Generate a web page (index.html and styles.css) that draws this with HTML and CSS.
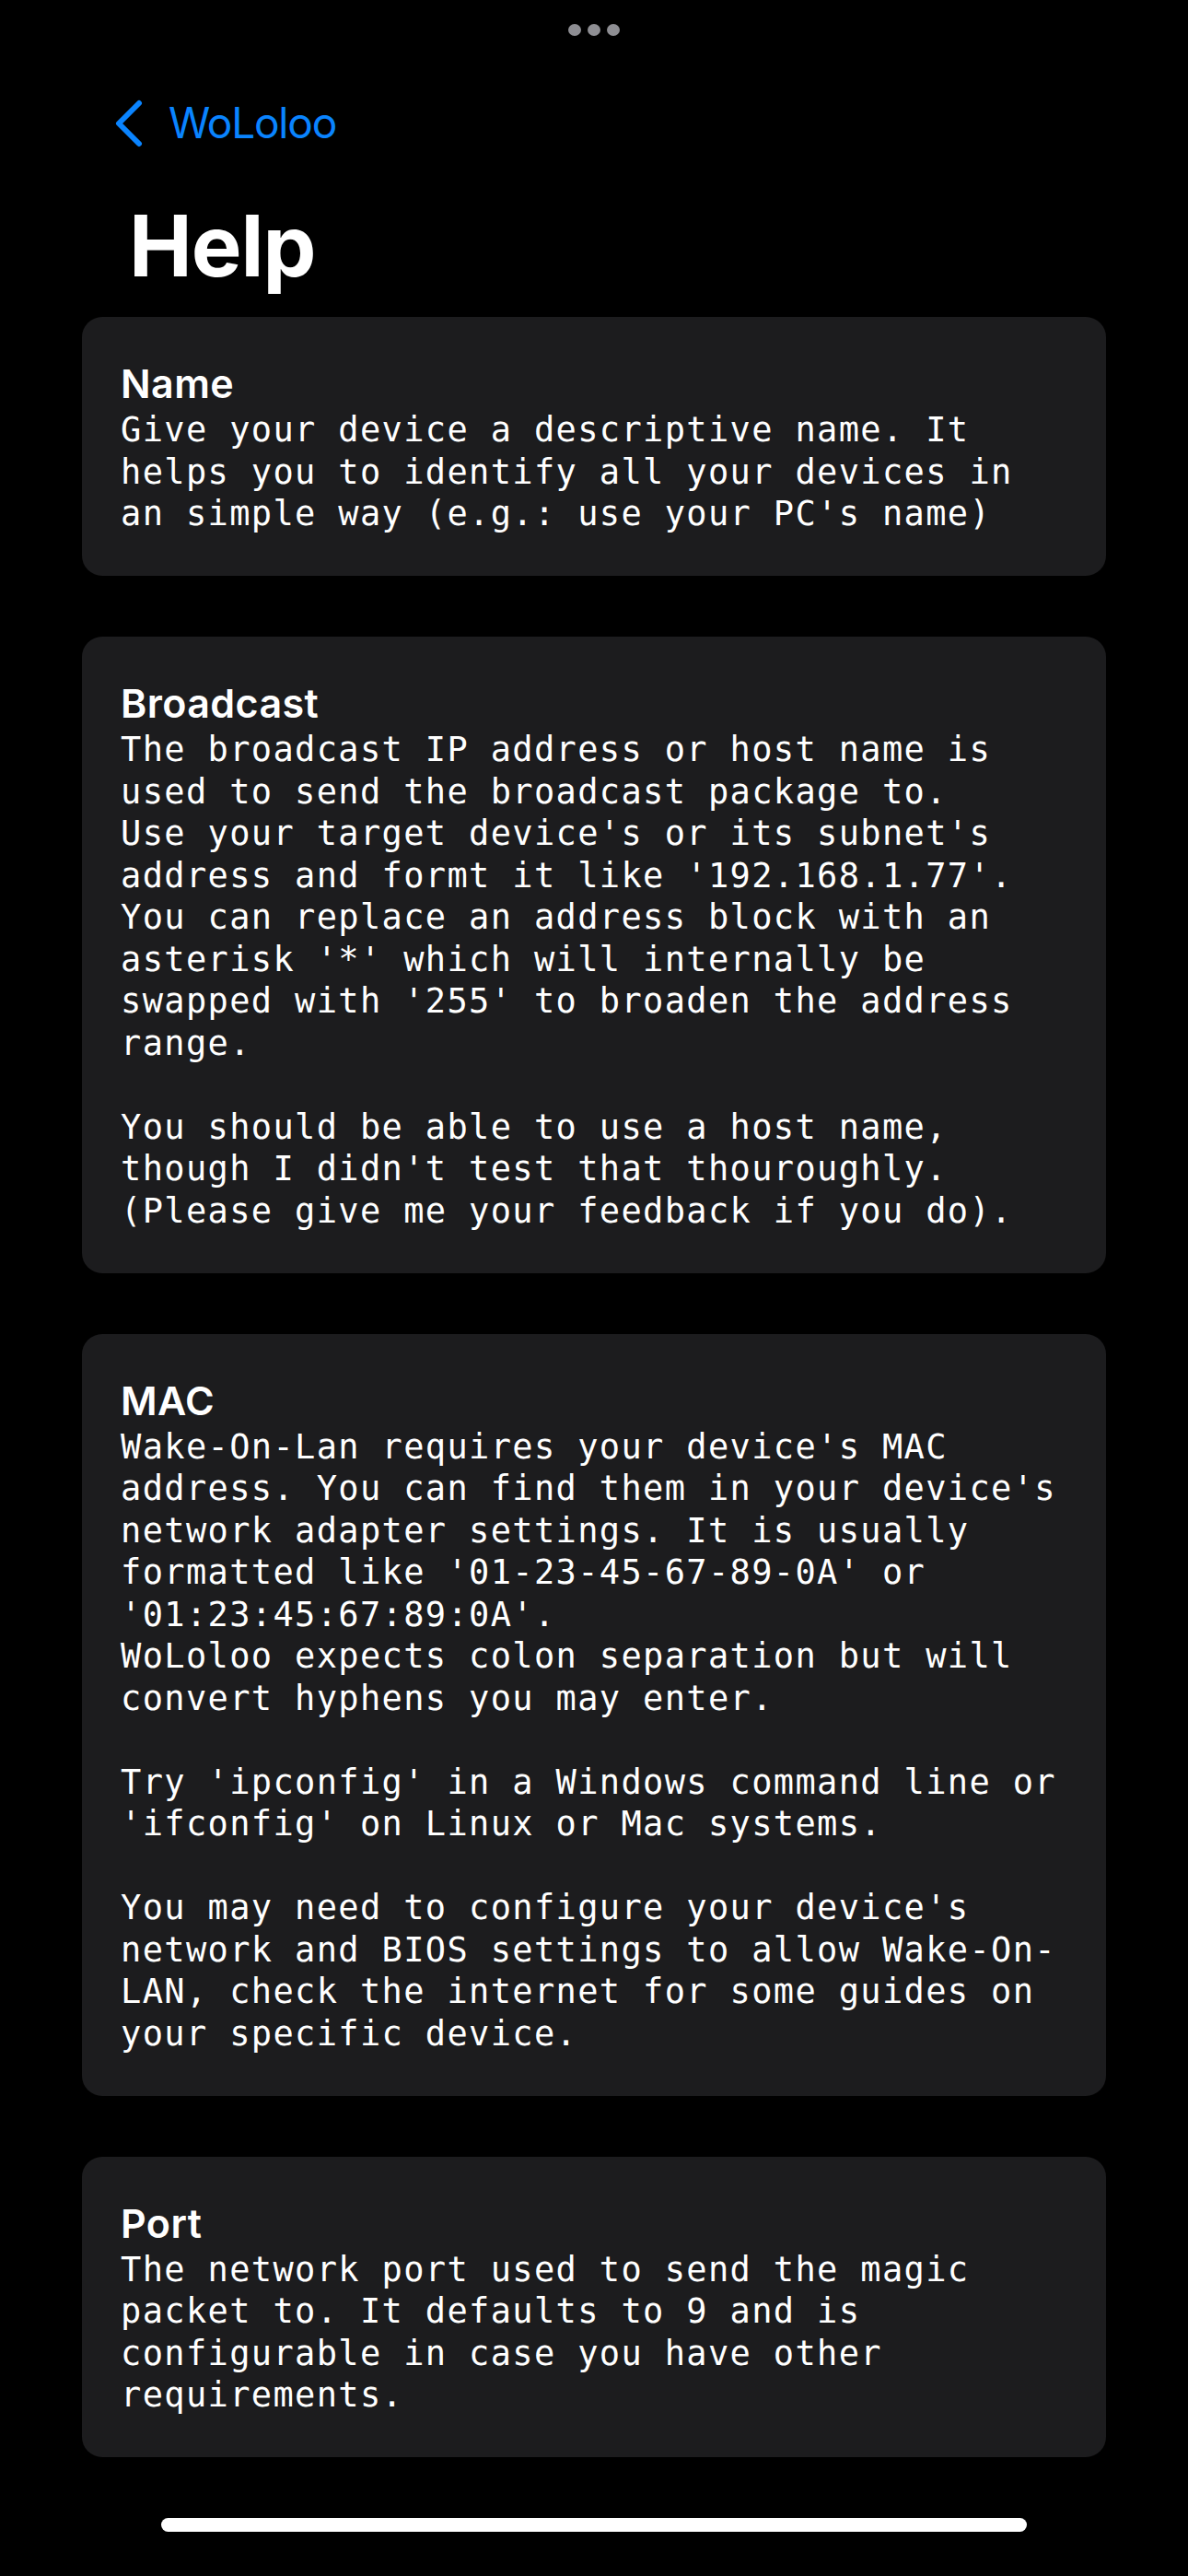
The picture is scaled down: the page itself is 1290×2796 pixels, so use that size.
FILE: index.html
```html
<!DOCTYPE html>
<html lang="en">
<head>
  <meta charset="UTF-8" />
  <meta name="viewport" content="width=device-width, initial-scale=1" />
  <title>WoLoloo - Help</title>
  <link rel="stylesheet" href="styles.css">
</head>
<body>
  <div class="screen">
    <!-- top grabber dots -->
    <div class="dots">
      <span></span><span></span><span></span>
    </div>

    <!-- navigation -->
    <div class="nav">
      <svg class="chevron" width="32" height="52" viewBox="0 0 32 52">
        <polyline points="28,4 6,26 28,48" fill="none" stroke="#0a84ff" stroke-width="6" stroke-linecap="round" stroke-linejoin="round" />
      </svg>
      <span class="back-label">WoLoloo</span>
    </div>

    <h1 class="page-title">Help</h1>

    <section class="card">
      <h2>Name</h2>
      <p>Give your device a descriptive name. It<br>helps you to identify all your devices in<br>an simple way (e.g.: use your PC's name)</p>
    </section>

    <section class="card">
      <h2>Broadcast</h2>
      <p>The broadcast IP address or host name is<br>used to send the broadcast package to.<br>Use your target device's or its subnet's<br>address and formt it like '192.168.1.77'.<br>You can replace an address block with an<br>asterisk '*' which will internally be<br>swapped with '255' to broaden the address<br>range.<br><br>You should be able to use a host name,<br>though I didn't test that thouroughly.<br>(Please give me your feedback if you do).</p>
    </section>

    <section class="card">
      <h2>MAC</h2>
      <p>Wake-On-Lan requires your device's MAC<br>address. You can find them in your device's<br>network adapter settings. It is usually<br>formatted like '01-23-45-67-89-0A' or<br>'01:23:45:67:89:0A'.<br>WoLoloo expects colon separation but will<br>convert hyphens you may enter.<br><br>Try 'ipconfig' in a Windows command line or<br>'ifconfig' on Linux or Mac systems.<br><br>You may need to configure your device's<br>network and BIOS settings to allow Wake-On-<br>LAN, check the internet for some guides on<br>your specific device.</p>
    </section>

    <section class="card">
      <h2>Port</h2>
      <p>The network port used to send the magic<br>packet to. It defaults to 9 and is<br>configurable in case you have other<br>requirements.</p>
    </section>

    <div class="home-bar"></div>
  </div>
</body>
</html>
```

FILE: styles.css
```css
body {
  margin: 0;
  padding: 0;
  background: #000;
  color: #fff;
  font-family: Inter, "Noto Sans", sans-serif;
}

.screen {
  width: 1290px;
  min-height: 2796px;
  box-sizing: border-box;
  padding: 26px 89px 0;
}

.dots {
  display: flex;
  justify-content: center;
  gap: 7px;
  height: 13px;
}

.dots span {
  width: 14px;
  height: 13px;
  border-radius: 50%;
  background: #8e8e93;
}

.nav {
  display: flex;
  align-items: center;
  gap: 28px;
  height: 51px;
  margin-top: 69px;
  padding-left: 34px;
}

.chevron {
  display: block;
  flex: none;
}

.back-label {
  color: #0a84ff;
  font-size: 46px;
  line-height: 51px;
  letter-spacing: -1.2px;
}

.page-title {
  margin: 53px 0 22px;
  padding-left: 51px;
  font-size: 92px;
  line-height: 110px;
  font-weight: 700;
  letter-spacing: -1px;
}

.card {
  background-color: #1c1c1e;
  border-radius: 22px;
  padding: 46px 42px 44.5px 42px;
  margin-bottom: 66px;
}

.card h2 {
  margin: 0 0 2px;
  font-size: 43px;
  line-height: 52px;
  font-weight: 600;
  letter-spacing: 0.4px;
}

.card p {
  margin: 0;
  font-family: "DejaVu Sans Mono", "Liberation Mono", monospace;
  font-size: 37px;
  line-height: 45.5px;
  letter-spacing: 1.35px;
  white-space: nowrap;
}

.home-bar {
  width: 940px;
  height: 15px;
  margin: 28px auto 0;
  border-radius: 8px;
  background: #fff;
}
```
